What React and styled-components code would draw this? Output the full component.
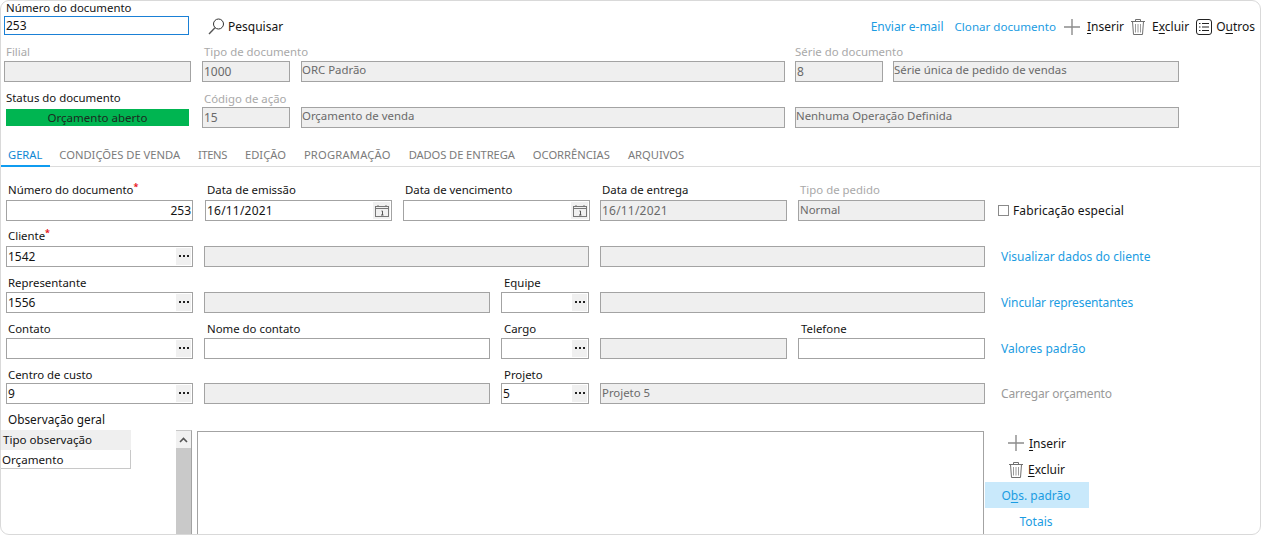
import React from "react";
import styled, { createGlobalStyle } from "styled-components";

const GlobalStyle = createGlobalStyle`
  html, body {
    margin: 0;
    background: #fff;
  }
  body {
    font-family: "Noto Sans", "Open Sans", sans-serif;
    font-size: 12px;
    line-height: 15px;
    color: #141414;
  }
`;

const Frame = styled.div`
  box-sizing: border-box;
  width: 1261px;
  height: 535px;
  border: 1px solid #d9d9d9;
  border-radius: 9px;
  overflow: hidden;
`;

const Header = styled.div`
  height: 139px;
  padding: 0 3px;
`;

const Toolbar = styled.div`
  display: flex;
  align-items: flex-end;
  height: 34px;
  padding-right: 2px;
`;

const SearchBlock = styled.div`
  width: 185px;
  margin-right: 19px;
`;

const TopLabel = styled.label`
  display: block;
  padding-left: 2px;
  height: 15px;
  line-height: 13px;
  font-size: 11.4px;
`;

const SearchInput = styled.div`
  box-sizing: border-box;
  height: 19px;
  border: 1px solid #1a80d6;
  line-height: 17px;
  padding-left: 1px;
`;

const Action = styled.span`
  display: inline-flex;
  align-items: center;
  gap: ${(p) => p.$gap ?? 3}px;
  height: 21px;
  margin-bottom: -2px;
  font-size: ${(p) => p.$size ?? 12}px;
  color: ${(p) => (p.$link ? "#1b9ce2" : "#141414")};
`;

const Actions = styled.div`
  display: flex;
  align-items: center;
  gap: 11px;
  margin-left: auto;
`;

const Tight = styled.div`
  display: flex;
  align-items: center;
  gap: 7px;
  margin-left: -3px;
`;

const Key = styled.u`
  text-underline-offset: 2px;
`;

const HeaderGrid = styled.div`
  display: grid;
  grid-template-columns: 188px 88px 485px 88px 286px;
  grid-template-rows: 47px 46px;
  column-gap: 10px;
`;

const Cell = styled.div`
  display: flex;
  flex-direction: column;
  justify-content: flex-end;
  min-width: 0;
  grid-column: span ${(p) => p.$span || 1};
  margin-left: ${(p) => p.$left ?? 0}px;
  margin-right: ${(p) => p.$right ?? 0}px;
`;

const Label = styled.label`
  display: block;
  height: 15px;
  margin-bottom: ${(p) => p.$gap ?? 2}px;
  padding-left: ${(p) => p.$indent ?? 2}px;
  font-size: 11.4px;
  color: ${(p) => (p.$muted ? "#a9a9a9" : "#141414")};
  white-space: nowrap;
`;

const Required = styled.sup`
  color: #e8141c;
  font-size: 9px;
  font-weight: 700;
  line-height: 0;
  position: relative;
  top: 1px;
`;

const Box = styled.div`
  box-sizing: border-box;
  display: flex;
  align-items: center;
  height: 21px;
  border: 1px solid #a3a3a3;
  background: ${(p) => (p.$off ? "#efefef" : "#fff")};
  color: ${(p) => (p.$off ? "#6a6a6a" : "#141414")};
  padding: 0 1px;
  line-height: 17px;
  ${(p) => p.$width && `width: ${p.$width}px;`}
`;

const BoxText = styled.span`
  flex: 1;
  white-space: nowrap;
  position: relative;
  top: ${(p) => (p.$head ? "-2px" : p.$raised ? "-1px" : "0")};
  margin-left: ${(p) => (p.$head ? "-1px" : "0")};
  font-size: ${(p) => (p.$raised || p.$head ? "11.4px" : "inherit")};
  letter-spacing: ${(p) => (p.$date ? "0.2px" : "normal")};
  text-align: ${(p) => (p.$end ? "right" : "left")};
`;

const StatusBar = styled.div`
  height: 17px;
  margin: 0 3px 2px 2px;
  line-height: 17px;
  font-size: 11.5px;
  text-align: center;
  background: #00b551;
  color: #1c2a20;
`;

const Tabs = styled.div`
  display: flex;
  align-items: flex-end;
  box-sizing: border-box;
  height: 27px;
  border-bottom: 1px solid #dcdcdc;
`;

const Tab = styled.div`
  height: 24px;
  padding: 0 ${(p) => (p.$first ? "8px" : "9px")} 0 ${(p) => (p.$first ? "7px" : "9px")};
  margin-bottom: -1px;
  line-height: 24px;
  font-size: 11.2px;
  letter-spacing: ${(p) => p.$spacing ?? 0}px;
  box-sizing: border-box;
  color: ${(p) => (p.$active ? "#0f87d4" : "#7b7b7b")};
  border-bottom: 2px solid ${(p) => (p.$active ? "#0f9cf0" : "transparent")};
`;

const Form = styled.div`
  display: grid;
  grid-template-columns: 187px 187px 88px 88px 187px 187px 1fr;
  grid-template-rows: repeat(4, 46px) 45px;
  column-gap: 11px;
  margin-top: 8px;
  padding-left: 5px;
`;

const Side = styled.div`
  display: flex;
  align-items: center;
  height: 21px;
  align-self: end;
  padding-left: ${(p) => p.$indent ?? 5}px;
  letter-spacing: ${(p) => p.$spacing ?? 0}px;
  color: ${(p) => p.$color ?? "#1b9ce2"};
  white-space: nowrap;
`;

const Check = styled.span`
  box-sizing: border-box;
  width: 11px;
  height: 11px;
  margin-right: 4px;
  border: 1px solid #8a8a8a;
  background: #fff;
`;

const PickerButton = styled.span`
  display: flex;
  align-items: center;
  justify-content: center;
  flex: none;
  width: ${(p) => p.$width ?? 15}px;
  height: 17px;
  background: #f0f0f0;
`;

const ObsLabel = styled.div`
  height: 26px;
  padding: 8px 0 0 7px;
  box-sizing: border-box;
  font-size: 11.8px;
`;

const ObsRow = styled.div`
  display: flex;
  align-items: flex-start;
  height: 105px;
`;

const ObsList = styled.div`
  width: 130px;
  margin-right: 45px;
  flex: none;
  font-size: 11.6px;
`;

const ObsHead = styled.div`
  height: 20px;
  line-height: 20px;
  padding-left: 2px;
  background: #efefef;
`;

const ObsCell = styled.div`
  box-sizing: border-box;
  height: 19px;
  line-height: 19px;
  padding-left: 1px;
  border-right: 1px solid #c8c8c8;
  border-bottom: 1px solid #c8c8c8;
`;

const Scrollbar = styled.div`
  flex: none;
  box-sizing: border-box;
  width: 16px;
  height: 105px;
  margin-right: 5px;
  background: #c9c9c9;
  border-right: 1px solid #a3a3a3;
  border-top: 1px solid #c8c8c8;
`;

const ScrollButton = styled.div`
  display: flex;
  align-items: center;
  justify-content: center;
  height: 17px;
  background: #f1f1f1;
`;

const ObsText = styled.div`
  flex: none;
  box-sizing: border-box;
  width: 787px;
  height: 105px;
  margin: 1px 1px 0 0;
  border: 1px solid #a3a3a3;
  border-bottom: none;
  background: #fff;
`;

const ObsActions = styled.div`
  display: flex;
  flex-direction: column;
  width: 104px;
  flex: none;
`;

const ObsAction = styled.div`
  display: flex;
  align-items: center;
  justify-content: center;
  gap: 5px;
  box-sizing: border-box;
  height: 26px;
  padding-right: ${(p) => (p.$link ? "2px" : "0")};
  background: ${(p) => (p.$selected ? "#c9e9fb" : "transparent")};
  color: ${(p) => (p.$link ? "#1b9ce2" : "#141414")};
`;

const PlusIcon = () => (
  <svg width="16" height="16" viewBox="0 0 16 16" fill="none" stroke="#8c8c8c" strokeWidth="1.4">
    <path d="M8 0v16M0 8h16" />
  </svg>
);

const TrashIcon = () => (
  <svg width="14" height="17" viewBox="0 0 14 17" fill="none" stroke="#6f6f6f" strokeWidth="1">
    <path d="M0 3.5h14M4.5 3.5V1.5h5v2M1.5 3.5l1 13h9l1-13" />
    <path d="M4.5 6v8.5M7 6v8.5M9.5 6v8.5" stroke="#9a9a9a" />
  </svg>
);

const ListIcon = () => (
  <svg width="16" height="16" viewBox="0 0 16 16" fill="none" stroke="#222" strokeWidth="1">
    <rect x="0.5" y="0.5" width="15" height="15" rx="2.5" />
    <path d="M6 4.5h7M6 8h7M6 11.5h7M3 4.5h1.5M3 8h1.5M3 11.5h1.5" />
  </svg>
);

const SearchIcon = () => (
  <svg width="17" height="17" viewBox="0 0 17 17" fill="none">
    <circle cx="10.5" cy="6" r="5" stroke="#333" strokeWidth="1" />
    <path d="M7 9.8L1 16" stroke="#555" strokeWidth="1.4" />
  </svg>
);

const CalendarIcon = () => (
  <svg width="14" height="12" viewBox="0 0 14 12" fill="none" stroke="#777" strokeWidth="1">
    <rect x="0.5" y="1.5" width="13" height="10" />
    <path d="M0.5 3.5h13M3 0v2M11 0v2" />
    <path d="M6.5 6h1v4M6 10h2.5" stroke="#555" />
  </svg>
);

const DotsIcon = () => (
  <svg width="10" height="3" viewBox="0 0 10 3" fill="#222">
    <rect x="0" y="0" width="2" height="2" />
    <rect x="4" y="0" width="2" height="2" />
    <rect x="8" y="0" width="2" height="2" />
  </svg>
);

const ArrowIcon = () => (
  <svg width="9" height="6" viewBox="0 0 9 6" fill="none" stroke="#555" strokeWidth="1.6">
    <path d="M1 5l3.5-3.5L8 5" />
  </svg>
);

const Lookup = ({ value }) => (
  <Box>
    <BoxText>{value}</BoxText>
    <PickerButton>
      <DotsIcon />
    </PickerButton>
  </Box>
);

const DateBox = ({ value }) => (
  <Box>
    <BoxText $date>{value}</BoxText>
    <PickerButton $width={17}>
      <CalendarIcon />
    </PickerButton>
  </Box>
);

const tabs = [
  { name: "GERAL" },
  { name: "CONDIÇÕES DE VENDA" },
  { name: "ITENS", spacing: -0.4 },
  { name: "EDIÇÃO" },
  { name: "PROGRAMAÇÃO", spacing: 0.2 },
  { name: "DADOS DE ENTREGA", spacing: -0.1 },
  { name: "OCORRÊNCIAS" },
  { name: "ARQUIVOS" },
];

export default function App() {
  return (
    <Frame>
      <GlobalStyle />
      <Header>
        <Toolbar>
          <SearchBlock>
            <TopLabel>Número do documento</TopLabel>
            <SearchInput>253</SearchInput>
          </SearchBlock>
          <Action>
            <SearchIcon />
            Pesquisar
          </Action>
          <Actions>
            <Action $link>Enviar e-mail</Action>
            <Action $link $size={11.6}>
              Clonar documento
            </Action>
            <Tight>
              <Action $gap={7}>
                <PlusIcon />
                <span>
                  <Key>I</Key>nserir
                </span>
              </Action>
              <Action $gap={7}>
                <TrashIcon />
                <span>
                  E<Key>x</Key>cluir
                </span>
              </Action>
              <Action $gap={4}>
                <ListIcon />
                <span>
                  O<Key>u</Key>tros
                </span>
              </Action>
            </Tight>
          </Actions>
        </Toolbar>
        <HeaderGrid>
          <Cell>
            <Label $muted>Filial</Label>
            <Box $off $width={187} />
          </Cell>
          <Cell>
            <Label $muted>Tipo de documento</Label>
            <Box $off>
              <BoxText>1000</BoxText>
            </Box>
          </Cell>
          <Cell $left={1}>
            <Box $off>
              <BoxText $head>ORC Padrão</BoxText>
            </Box>
          </Cell>
          <Cell>
            <Label $muted $indent={0}>
              Série do documento
            </Label>
            <Box $off>
              <BoxText>8</BoxText>
            </Box>
          </Cell>
          <Cell>
            <Box $off>
              <BoxText $head>Série única de pedido de vendas</BoxText>
            </Box>
          </Cell>
          <Cell>
            <Label $gap={4}>Status do documento</Label>
            <StatusBar>Orçamento aberto</StatusBar>
          </Cell>
          <Cell>
            <Label $muted $gap={1}>
              Código de ação
            </Label>
            <Box $off>
              <BoxText>15</BoxText>
            </Box>
          </Cell>
          <Cell $left={1}>
            <Box $off>
              <BoxText $head>Orçamento de venda</BoxText>
            </Box>
          </Cell>
          <Cell $span={2}>
            <Box $off>
              <BoxText $head>Nenhuma Operação Definida</BoxText>
            </Box>
          </Cell>
        </HeaderGrid>
      </Header>
      <Tabs>
        {tabs.map((tab, i) => (
          <Tab key={tab.name} $first={i === 0} $active={i === 0} $spacing={tab.spacing}>
            {tab.name}
          </Tab>
        ))}
      </Tabs>
      <Form>
        <Cell>
          <Label $gap={3}>
            Número do documento<Required>*</Required>
          </Label>
          <Box>
            <BoxText $end>253</BoxText>
          </Box>
        </Cell>
        <Cell $left={1} $right={-1}>
          <Label $gap={3}>Data de emissão</Label>
          <DateBox value="16/11/2021" />
        </Cell>
        <Cell $span={2} $left={1} $right={-1}>
          <Label $gap={3}>Data de vencimento</Label>
          <DateBox />
        </Cell>
        <Cell>
          <Label $gap={3}>Data de entrega</Label>
          <Box $off>
            <BoxText $date>16/11/2021</BoxText>
          </Box>
        </Cell>
        <Cell>
          <Label $muted $gap={3}>
            Tipo de pedido
          </Label>
          <Box $off>
            <BoxText $raised>Normal</BoxText>
          </Box>
        </Cell>
        <Side $indent={2} $spacing={0.1} $color="#141414">
          <Check />
          Fabricação especial
        </Side>

        <Cell>
          <Label $gap={3}>
            Cliente<Required>*</Required>
          </Label>
          <Lookup value="1542" />
        </Cell>
        <Cell $span={3}>
          <Box $off />
        </Cell>
        <Cell $span={2}>
          <Box $off />
        </Cell>
        <Side>Visualizar dados do cliente</Side>

        <Cell>
          <Label>Representante</Label>
          <Lookup value="1556" />
        </Cell>
        <Cell $span={2}>
          <Box $off />
        </Cell>
        <Cell>
          <Label $indent={3}>Equipe</Label>
          <Lookup />
        </Cell>
        <Cell $span={2}>
          <Box $off />
        </Cell>
        <Side $spacing={-0.1}>Vincular representantes</Side>

        <Cell>
          <Label>Contato</Label>
          <Lookup />
        </Cell>
        <Cell $span={2}>
          <Label $indent={3}>Nome do contato</Label>
          <Box />
        </Cell>
        <Cell>
          <Label $indent={3}>Cargo</Label>
          <Lookup />
        </Cell>
        <Cell>
          <Box $off />
        </Cell>
        <Cell>
          <Label $indent={3}>Telefone</Label>
          <Box />
        </Cell>
        <Side>Valores padrão</Side>

        <Cell>
          <Label $gap={1}>Centro de custo</Label>
          <Lookup value="9" />
        </Cell>
        <Cell $span={2}>
          <Box $off />
        </Cell>
        <Cell>
          <Label $indent={3} $gap={1}>
            Projeto
          </Label>
          <Lookup value="5" />
        </Cell>
        <Cell $span={2}>
          <Box $off>
            <BoxText $raised>Projeto 5</BoxText>
          </Box>
        </Cell>
        <Side $color="#9a9a9a" $spacing={-0.2}>
          Carregar orçamento
        </Side>
      </Form>
      <ObsLabel>Observação geral</ObsLabel>
      <ObsRow>
        <ObsList>
          <ObsHead>Tipo observação</ObsHead>
          <ObsCell>Orçamento</ObsCell>
        </ObsList>
        <Scrollbar>
          <ScrollButton>
            <ArrowIcon />
          </ScrollButton>
        </Scrollbar>
        <ObsText />
        <ObsActions>
          <ObsAction>
            <PlusIcon />
            <span>
              <Key>I</Key>nserir
            </span>
          </ObsAction>
          <ObsAction>
            <TrashIcon />
            <span>
              <Key>E</Key>xcluir
            </span>
          </ObsAction>
          <ObsAction $selected $link>
            <span>
              O<Key>b</Key>s. padrão
            </span>
          </ObsAction>
          <ObsAction $link>Totais</ObsAction>
        </ObsActions>
      </ObsRow>
    </Frame>
  );
}
